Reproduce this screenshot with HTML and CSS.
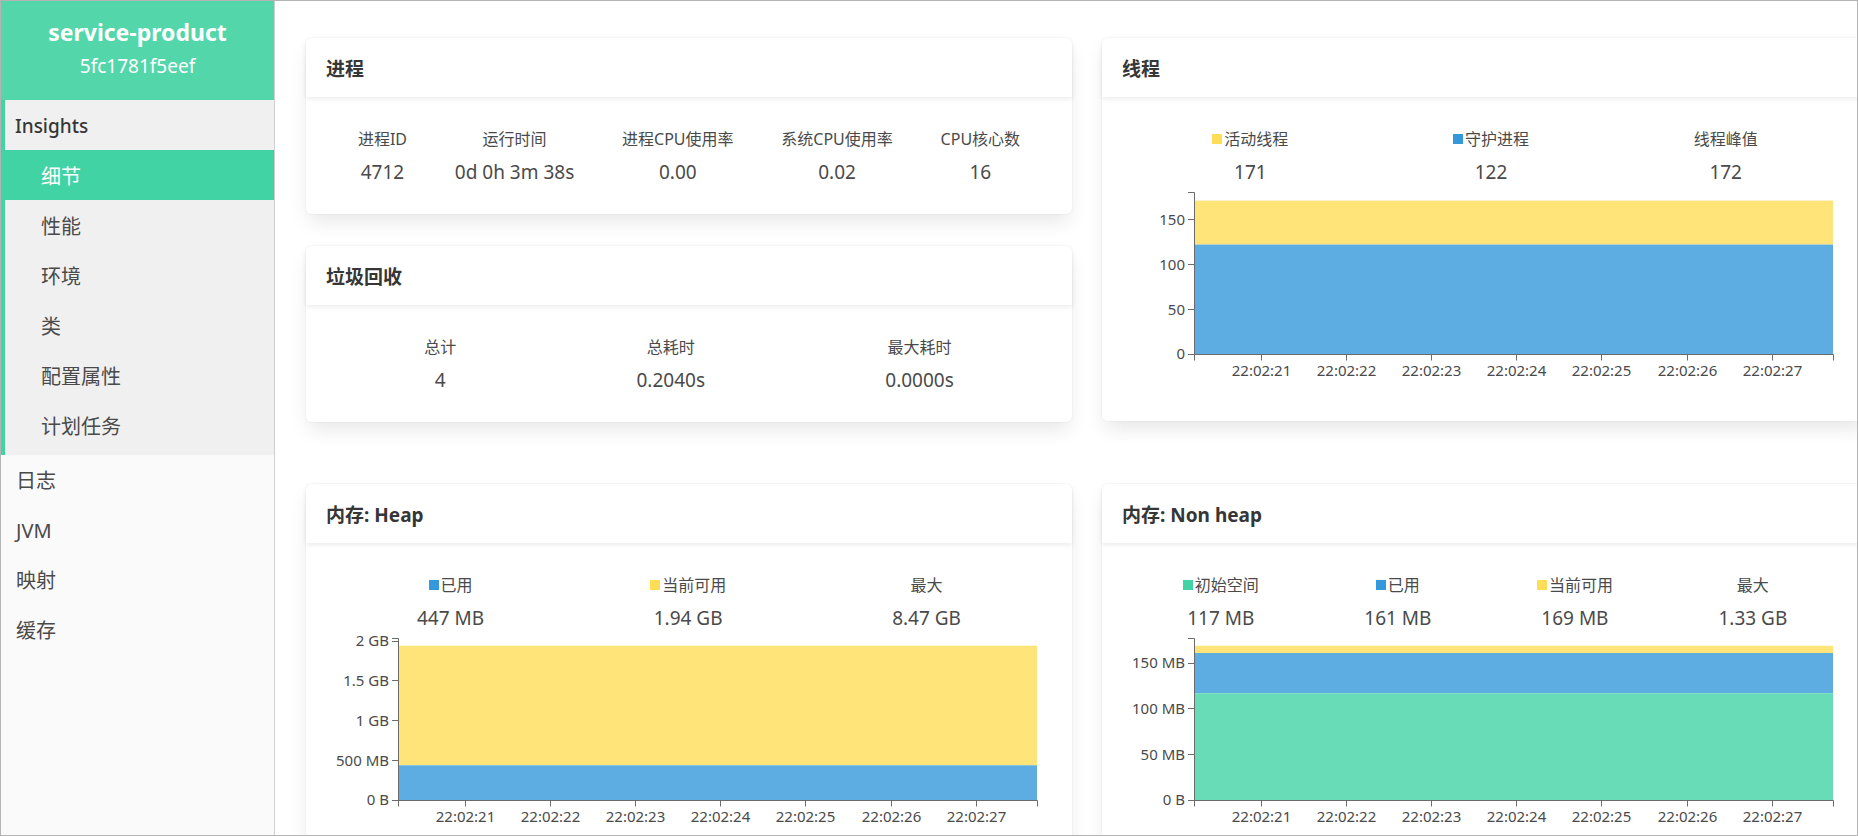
FILE: index.html
```html
<!DOCTYPE html>
<html lang="zh-CN">
<head>
<meta charset="utf-8">
<title>service-product - 细节</title>
<link rel="stylesheet" href="styles.css">
</head>
<body>
<div class="frame">
  <aside class="sidebar">
    <div class="app-head">
      <div class="app-name">service-product</div>
      <div class="app-id">5fc1781f5eef</div>
    </div>
    <div class="group">
      <div class="group-label">Insights</div>
      <a class="item active">细节</a>
      <a class="item">性能</a>
      <a class="item">环境</a>
      <a class="item">类</a>
      <a class="item">配置属性</a>
      <a class="item">计划任务</a>
    </div>
    <a class="top-item">日志</a>
    <a class="top-item">JVM</a>
    <a class="top-item">映射</a>
    <a class="top-item">缓存</a>
  </aside>

  <main class="main">
    <div class="grid">
      <div class="col">
        <section class="card">
          <header class="card-head">进程</header>
          <div class="card-body">
            <div class="level">
              <div class="level-item"><div class="lbl">进程ID</div><div class="val">4712</div></div>
              <div class="level-item"><div class="lbl">运行时间</div><div class="val">0d 0h 3m 38s</div></div>
              <div class="level-item"><div class="lbl">进程CPU使用率</div><div class="val">0.00</div></div>
              <div class="level-item"><div class="lbl">系统CPU使用率</div><div class="val">0.02</div></div>
              <div class="level-item"><div class="lbl">CPU核心数</div><div class="val">16</div></div>
            </div>
          </div>
        </section>
        <section class="card">
          <header class="card-head">垃圾回收</header>
          <div class="card-body">
            <div class="level">
              <div class="level-item"><div class="lbl">总计</div><div class="val">4</div></div>
              <div class="level-item"><div class="lbl">总耗时</div><div class="val">0.2040s</div></div>
              <div class="level-item"><div class="lbl">最大耗时</div><div class="val">0.0000s</div></div>
            </div>
          </div>
        </section>
      </div>

      <section class="card">
        <header class="card-head">线程</header>
        <div class="card-body">
          <div class="level">
            <div class="level-item"><div class="lbl"><span class="sq sq-yellow"></span>活动线程</div><div class="val">171</div></div>
            <div class="level-item"><div class="lbl"><span class="sq sq-blue"></span>守护进程</div><div class="val">122</div></div>
            <div class="level-item"><div class="lbl">线程峰值</div><div class="val">172</div></div>
          </div>
          <svg class="chart" width="710" height="207" viewBox="0 0 710 207">
            <rect x="64" y="14.6" width="639" height="43.97" fill="#ffe479"/>
            <rect x="64" y="58.57" width="639" height="109.43" fill="#5dade2"/>
            <g class="axis">
              <path d="M58,6.5H64.5V168.5H58"/>
              <path d="M58,123.5H64M58,78.5H64M58,33.5H64"/>
              <text class="yl" x="55" y="173.3">0</text>
              <text class="yl" x="55" y="128.5">50</text>
              <text class="yl" x="55" y="83.6">100</text>
              <text class="yl" x="55" y="38.8">150</text>
              <path d="M64.5,174.5V168.5H703.5V174.5"/>
              <path d="M131.5,168.5V174.5M216.5,168.5V174.5M301.5,168.5V174.5M386.5,168.5V174.5M471.5,168.5V174.5M557.5,168.5V174.5M642.5,168.5V174.5"/>
              <text class="xl" x="131.5" y="189.5">22:02:21</text>
              <text class="xl" x="216.5" y="189.5">22:02:22</text>
              <text class="xl" x="301.5" y="189.5">22:02:23</text>
              <text class="xl" x="386.5" y="189.5">22:02:24</text>
              <text class="xl" x="471.5" y="189.5">22:02:25</text>
              <text class="xl" x="557.5" y="189.5">22:02:26</text>
              <text class="xl" x="642.5" y="189.5">22:02:27</text>
            </g>
          </svg>
        </div>
      </section>

      <section class="card">
        <header class="card-head">内存: Heap</header>
        <div class="card-body">
          <div class="level">
            <div class="level-item"><div class="lbl"><span class="sq sq-blue"></span>已用</div><div class="val">447 MB</div></div>
            <div class="level-item"><div class="lbl"><span class="sq sq-yellow"></span>当前可用</div><div class="val">1.94 GB</div></div>
            <div class="level-item"><div class="lbl">最大</div><div class="val">8.47 GB</div></div>
          </div>
          <svg class="chart" width="710" height="207" viewBox="0 0 710 207">
            <rect x="64" y="13.7" width="639" height="119.58" fill="#ffe479"/>
            <rect x="64" y="133.28" width="639" height="34.72" fill="#5dade2"/>
            <g class="axis">
              <path d="M58,6.5H64.5V168.5H58"/>
              <path d="M58,128.5H64M58,88.5H64M58,48.5H64M58,9.5H64"/>
              <text class="yl" x="55" y="173.3">0 B</text>
              <text class="yl" x="55" y="133.5">500 MB</text>
              <text class="yl" x="55" y="93.8">1 GB</text>
              <text class="yl" x="55" y="54">1.5 GB</text>
              <text class="yl" x="55" y="14.3">2 GB</text>
              <path d="M64.5,174.5V168.5H703.5V174.5"/>
              <path d="M131.5,168.5V174.5M216.5,168.5V174.5M301.5,168.5V174.5M386.5,168.5V174.5M471.5,168.5V174.5M557.5,168.5V174.5M642.5,168.5V174.5"/>
              <text class="xl" x="131.5" y="189.5">22:02:21</text>
              <text class="xl" x="216.5" y="189.5">22:02:22</text>
              <text class="xl" x="301.5" y="189.5">22:02:23</text>
              <text class="xl" x="386.5" y="189.5">22:02:24</text>
              <text class="xl" x="471.5" y="189.5">22:02:25</text>
              <text class="xl" x="557.5" y="189.5">22:02:26</text>
              <text class="xl" x="642.5" y="189.5">22:02:27</text>
            </g>
          </svg>
        </div>
      </section>

      <section class="card">
        <header class="card-head">内存: Non heap</header>
        <div class="card-body">
          <div class="level">
            <div class="level-item"><div class="lbl"><span class="sq sq-green"></span>初始空间</div><div class="val">117 MB</div></div>
            <div class="level-item"><div class="lbl"><span class="sq sq-blue"></span>已用</div><div class="val">161 MB</div></div>
            <div class="level-item"><div class="lbl"><span class="sq sq-yellow"></span>当前可用</div><div class="val">169 MB</div></div>
            <div class="level-item"><div class="lbl">最大</div><div class="val">1.33 GB</div></div>
          </div>
          <svg class="chart" width="710" height="207" viewBox="0 0 710 207">
            <rect x="64" y="13.72" width="639" height="7.3" fill="#ffe479"/>
            <rect x="64" y="21.02" width="639" height="40.17" fill="#5dade2"/>
            <rect x="64" y="61.19" width="639" height="106.81" fill="#68dcb7"/>
            <g class="axis">
              <path d="M58,6.5H64.5V168.5H58"/>
              <path d="M58,122.5H64M58,76.5H64M58,31.5H64"/>
              <text class="yl" x="55" y="173.3">0 B</text>
              <text class="yl" x="55" y="127.6">50 MB</text>
              <text class="yl" x="55" y="82">100 MB</text>
              <text class="yl" x="55" y="36.4">150 MB</text>
              <path d="M64.5,174.5V168.5H703.5V174.5"/>
              <path d="M131.5,168.5V174.5M216.5,168.5V174.5M301.5,168.5V174.5M386.5,168.5V174.5M471.5,168.5V174.5M557.5,168.5V174.5M642.5,168.5V174.5"/>
              <text class="xl" x="131.5" y="189.5">22:02:21</text>
              <text class="xl" x="216.5" y="189.5">22:02:22</text>
              <text class="xl" x="301.5" y="189.5">22:02:23</text>
              <text class="xl" x="386.5" y="189.5">22:02:24</text>
              <text class="xl" x="471.5" y="189.5">22:02:25</text>
              <text class="xl" x="557.5" y="189.5">22:02:26</text>
              <text class="xl" x="642.5" y="189.5">22:02:27</text>
            </g>
          </svg>
        </div>
      </section>
    </div>
  </main>
</div>
</body>
</html>
```

FILE: styles.css
```css
* { box-sizing: border-box; }

html, body {
  margin: 0;
  padding: 0;
  background: #ffffff;
}

body {
  font-family: "Noto Sans", "Noto Sans CJK SC", sans-serif;
  color: #4a4a4a;
}

.frame {
  width: 1858px;
  height: 836px;
  border: 1px solid #b4b4b4;
  display: flex;
  overflow: hidden;
  background: #ffffff;
}

/* ---------- sidebar ---------- */
.sidebar {
  width: 274px;
  flex: 0 0 274px;
  background: #fafafa;
  border-right: 1px solid #cfcfcf;
  display: flex;
  flex-direction: column;
}

.app-head {
  height: 99px;
  background: #52d6aa;
  color: #ffffff;
  text-align: center;
  padding-top: 12px;
}

.app-name {
  font-size: 23px;
  font-weight: 700;
  line-height: 38px;
}

.app-id {
  font-size: 19px;
  line-height: 30px;
}

.group {
  background: #f0f0f0;
  border-left: 4px solid #42d3a5;
  padding-bottom: 5px;
}

.group-label {
  height: 50px;
  line-height: 52px;
  padding-left: 10px;
  font-size: 19px;
  font-weight: 500;
  color: #363636;
}

.item {
  display: block;
  height: 50px;
  line-height: 54px;
  padding-left: 36px;
  font-size: 20px;
  color: #4a4a4a;
}

.item.active {
  background: #42d3a5;
  color: #ffffff;
}

.top-item {
  display: block;
  height: 50px;
  line-height: 52px;
  padding-left: 15px;
  font-size: 20px;
  color: #4a4a4a;
}

/* ---------- main ---------- */
.main {
  flex: 1 1 auto;
  min-width: 0;
  overflow: hidden;
  padding: 37px 0 0 31px;
  background: #ffffff;
}

.grid {
  display: grid;
  grid-template-columns: 766px 766px;
  column-gap: 30px;
  row-gap: 62px;
  align-items: start;
  width: 1562px;
}

.col {
  display: flex;
  flex-direction: column;
  gap: 32px;
}

.card {
  background: #ffffff;
  border-radius: 6px;
  box-shadow: 0 10px 20px -3px rgba(10, 10, 10, 0.1), 0 0 0 1px rgba(10, 10, 10, 0.02);
}

.card-head {
  height: 59px;
  display: flex;
  align-items: center;
  padding: 0 20px;
  font-size: 19px;
  font-weight: 700;
  color: #363636;
  box-shadow: 0 2px 5px rgba(10, 10, 10, 0.08);
  border-radius: 6px 6px 0 0;
}

.card-body {
  padding: 31px 28px 28px;
}

.level {
  display: flex;
  justify-content: space-between;
}

.level-item {
  flex: 1 1 auto;
  display: flex;
  flex-direction: column;
  align-items: center;
  text-align: center;
}

.lbl {
  display: flex;
  align-items: center;
  font-size: 16px;
  line-height: 22px;
  margin-bottom: 8px;
  color: #4a4a4a;
  white-space: nowrap;
}

.val {
  font-size: 19px;
  line-height: 28px;
  color: #4a4a4a;
  white-space: nowrap;
}

.sq {
  display: inline-block;
  width: 10px;
  height: 10px;
  margin-right: 2px;
}

.sq-yellow { background: #ffdd57; }
.sq-blue { background: #3498db; }
.sq-green { background: #42d3a5; }

.chart {
  display: block;
  margin-top: 0;
}

.axis path {
  fill: none;
  stroke: #6b6b6b;
  stroke-width: 1;
}

.axis text {
  font-family: "Noto Sans", sans-serif;
  font-size: 15px;
  fill: #4a4a4a;
}

.axis .yl { text-anchor: end; }
.axis .xl { text-anchor: middle; }
```
